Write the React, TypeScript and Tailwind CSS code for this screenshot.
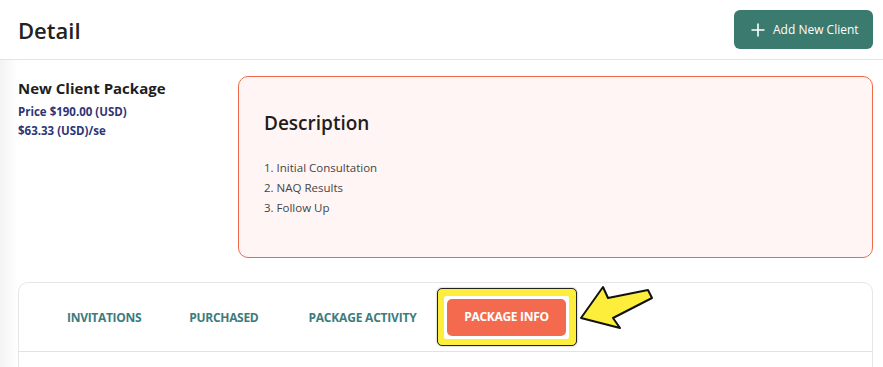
import React from "react";

export default function App() {
  return (
    <div className="w-[883px] h-[367px] overflow-hidden bg-white relative" style={{ fontFamily: '"Open Sans", "Noto Sans", sans-serif' }}>
      <div className="flex items-center justify-between h-[60px] border-b border-[#e3e3e3] pl-[18px] pr-[10px]">
        <h1 className="text-[22px] font-semibold text-[#222] mt-[2px]">Detail</h1>
        <button className="flex items-center gap-[8px] h-[39px] w-[139px] pl-[17px] rounded-[6px] bg-[#3b7a6f] text-white text-[12px]">
          <svg width="14" height="14" viewBox="0 0 14 14"><path d="M7 0.5V13.5M0.5 7H13.5" stroke="white" strokeWidth="1.6" /></svg>
          <span>Add New Client</span>
        </button>
      </div>
      <div className="flex bg-gradient-to-r from-[#f3f3f3] to-white to-[18px]">
        <div className="w-[238px] pl-[18px] pt-[18px] shrink-0">
          <div className="text-[15px] font-bold text-[#1e1e1e] leading-[20px]">New Client Package</div>
          <div className="text-[11.5px] font-bold text-[#2e3577] mt-[5px] leading-[18px]">Price $190.00 (USD)</div>
          <div className="text-[11.5px] font-bold text-[#2e3577] leading-[18px] mt-[1px]">$63.33 (USD)/se</div>
        </div>
        <div className="mt-[16px] w-[635px] h-[182px] border border-[#ef6a4c] bg-[#fff5f4] rounded-[10px] pl-[25px] pt-[33px]">
          <div className="text-[19px] font-semibold text-[#1e1e1e] leading-[26px]">Description</div>
          <div className="mt-[22px] text-[11.5px] text-[#444] leading-[20px]">
            <div>1. Initial Consultation</div>
            <div>2. NAQ Results</div>
            <div>3. Follow Up</div>
          </div>
        </div>
      </div>
      <div className="bg-gradient-to-r from-[#f3f3f3] to-white to-[18px] pl-[18px] pr-[10px] pt-[24px] h-[110px]">
        <div className="border border-[#e6e6e6] rounded-t-[10px] h-[100px]">
          <div className="h-[69px] border-b border-[#e2e2e2] flex items-center pl-[48px]">
            <span className="text-[12px] font-bold text-[#3c7c7c] tracking-[-0.3px] mt-[2px]">INVITATIONS</span>
            <span className="ml-[48px] text-[12px] font-bold text-[#3c7c7c] tracking-[-0.3px] mt-[2px]">PURCHASED</span>
            <span className="ml-[50px] text-[12px] font-bold text-[#3c7c7c] tracking-[-0.2px] mt-[2px]">PACKAGE ACTIVITY</span>
            <div className="ml-[20px] w-[140px] h-[58px] rounded-[5px] border-[1.5px] border-[#222] bg-[#fcee3a] p-[6.5px] shadow-[0_0_2px_rgba(0,0,0,0.4)]">
              <div className="w-full h-full bg-white rounded-[2px] p-[3px] flex">
                <button className="flex-1 rounded-[5px] bg-[#f46a4e] text-white text-[12px] font-bold tracking-[-0.3px]">PACKAGE INFO</button>
              </div>
            </div>
          </div>
        </div>
      </div>
      <svg className="absolute left-0 top-0 pointer-events-none" width="883" height="367">
        <polygon points="581,318 603,287 608,298 648,290 652,298 613,318 620,328" fill="#fcee3a" stroke="#111" strokeWidth="2" strokeLinejoin="round" />
      </svg>
    </div>
  );
}
